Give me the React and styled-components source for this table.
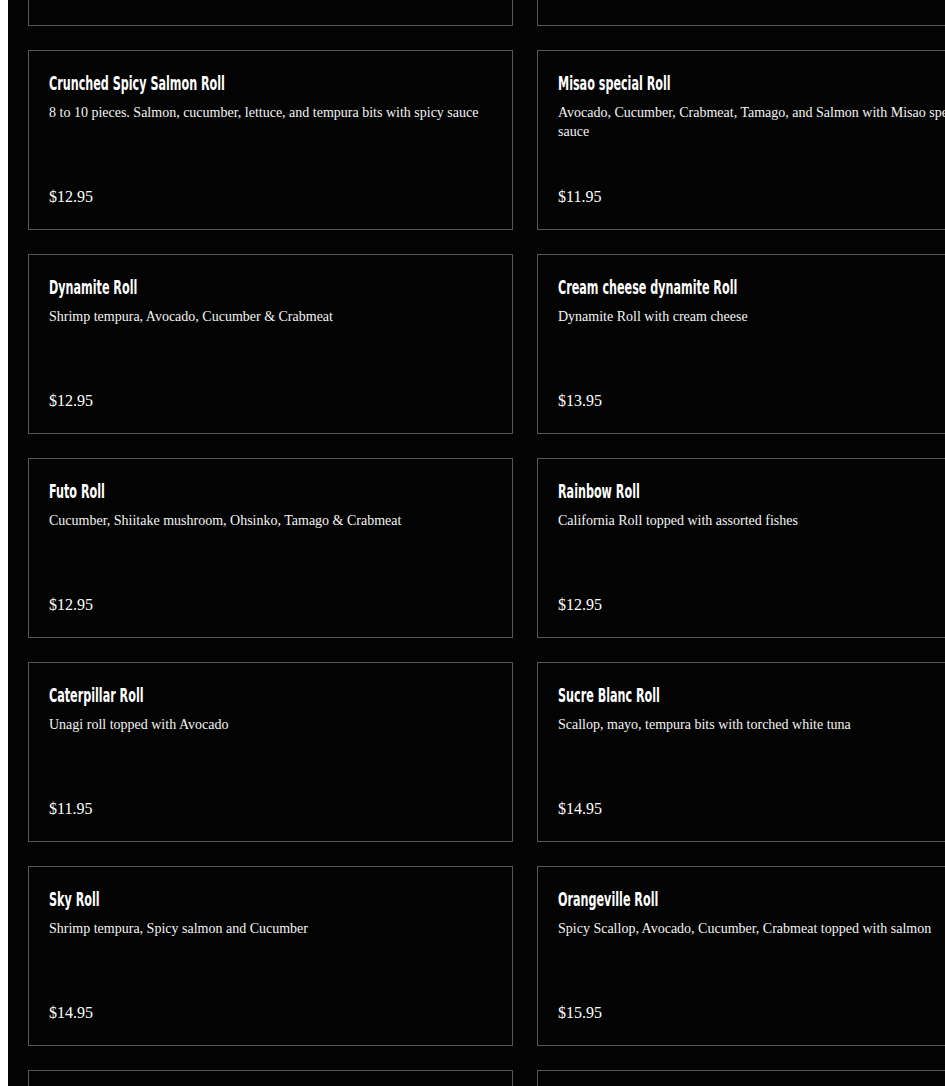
import styled, { createGlobalStyle } from "styled-components";

const GlobalStyle = createGlobalStyle`
  html {
    background: #ffffff;
  }
  body {
    margin: 0 0 0 8px;
    overflow: hidden;
  }
`;

const StyledMenuPage = styled.main`
  height: 1086px;
  overflow: hidden;
  background-color: #030303;
  padding-left: 20px;
`;

const StyledMenuGrid = styled.ul`
  display: grid;
  grid-template-columns: repeat(2, 485px);
  grid-auto-rows: 180px;
  gap: 24px;
  margin: -154px 0 0;
  padding: 0;
  list-style: none;
`;

const StyledMenuCard = styled.li`
  display: flex;
  flex-direction: column;
  box-sizing: border-box;
  border: 1px solid #575757;
  padding: 20px 20px 23px;
  color: #ffffff;
`;

// condensed display face: squeeze the condensed bold to the tall narrow look
const StyledItemName = styled.h3`
  margin: 0 0 8px;
  font-family: "DejaVu Sans Condensed", "DejaVu Sans", sans-serif;
  font-size: 19px;
  font-weight: 700;
  line-height: 24px;
  white-space: nowrap;
  transform: scaleX(0.654);
  transform-origin: left center;
`;

const StyledItemDesc = styled.p`
  margin: 0;
  font-family: "Liberation Serif", serif;
  font-size: 14px;
  line-height: 19px;
  color: #f4f4f4;
`;

const StyledItemPrice = styled.span`
  margin-top: auto;
  font-family: "Liberation Serif", serif;
  font-size: 16px;
  line-height: 19px;
`;

const menuItems = [
  { name: "California Roll", desc: "Crabmeat, Avocado and Cucumber", price: "$9.95" },
  { name: "Spicy Tuna Roll", desc: "Spicy tuna, Cucumber and tempura bits", price: "$9.95" },
  {
    name: "Crunched Spicy Salmon Roll",
    desc: "8 to 10 pieces. Salmon, cucumber, lettuce, and tempura bits with spicy sauce",
    price: "$12.95",
  },
  {
    name: "Misao special Roll",
    desc: "Avocado, Cucumber, Crabmeat, Tamago, and Salmon with Misao special sauce",
    price: "$11.95",
  },
  { name: "Dynamite Roll", desc: "Shrimp tempura, Avocado, Cucumber & Crabmeat", price: "$12.95" },
  { name: "Cream cheese dynamite Roll", desc: "Dynamite Roll with cream cheese", price: "$13.95" },
  { name: "Futo Roll", desc: "Cucumber, Shiitake mushroom, Ohsinko, Tamago & Crabmeat", price: "$12.95" },
  { name: "Rainbow Roll", desc: "California Roll topped with assorted fishes", price: "$12.95" },
  { name: "Caterpillar Roll", desc: "Unagi roll topped with Avocado", price: "$11.95" },
  { name: "Sucre Blanc Roll", desc: "Scallop, mayo, tempura bits with torched white tuna", price: "$14.95" },
  { name: "Sky Roll", desc: "Shrimp tempura, Spicy salmon and Cucumber", price: "$14.95" },
  {
    name: "Orangeville Roll",
    desc: "Spicy Scallop, Avocado, Cucumber, Crabmeat topped with salmon",
    price: "$15.95",
  },
  { name: "Dragon Roll", desc: "Shrimp tempura roll topped with Unagi and Avocado", price: "$15.95" },
  { name: "Volcano Roll", desc: "California Roll topped with baked spicy scallop", price: "$14.95" },
];

const App = () => {
  return (
    <>
      <GlobalStyle />
      <StyledMenuPage>
        <StyledMenuGrid>
          {menuItems.map((item) => (
            <StyledMenuCard key={item.name}>
              <StyledItemName>{item.name}</StyledItemName>
              <StyledItemDesc>{item.desc}</StyledItemDesc>
              <StyledItemPrice>{item.price}</StyledItemPrice>
            </StyledMenuCard>
          ))}
        </StyledMenuGrid>
      </StyledMenuPage>
    </>
  );
};

export default App;
